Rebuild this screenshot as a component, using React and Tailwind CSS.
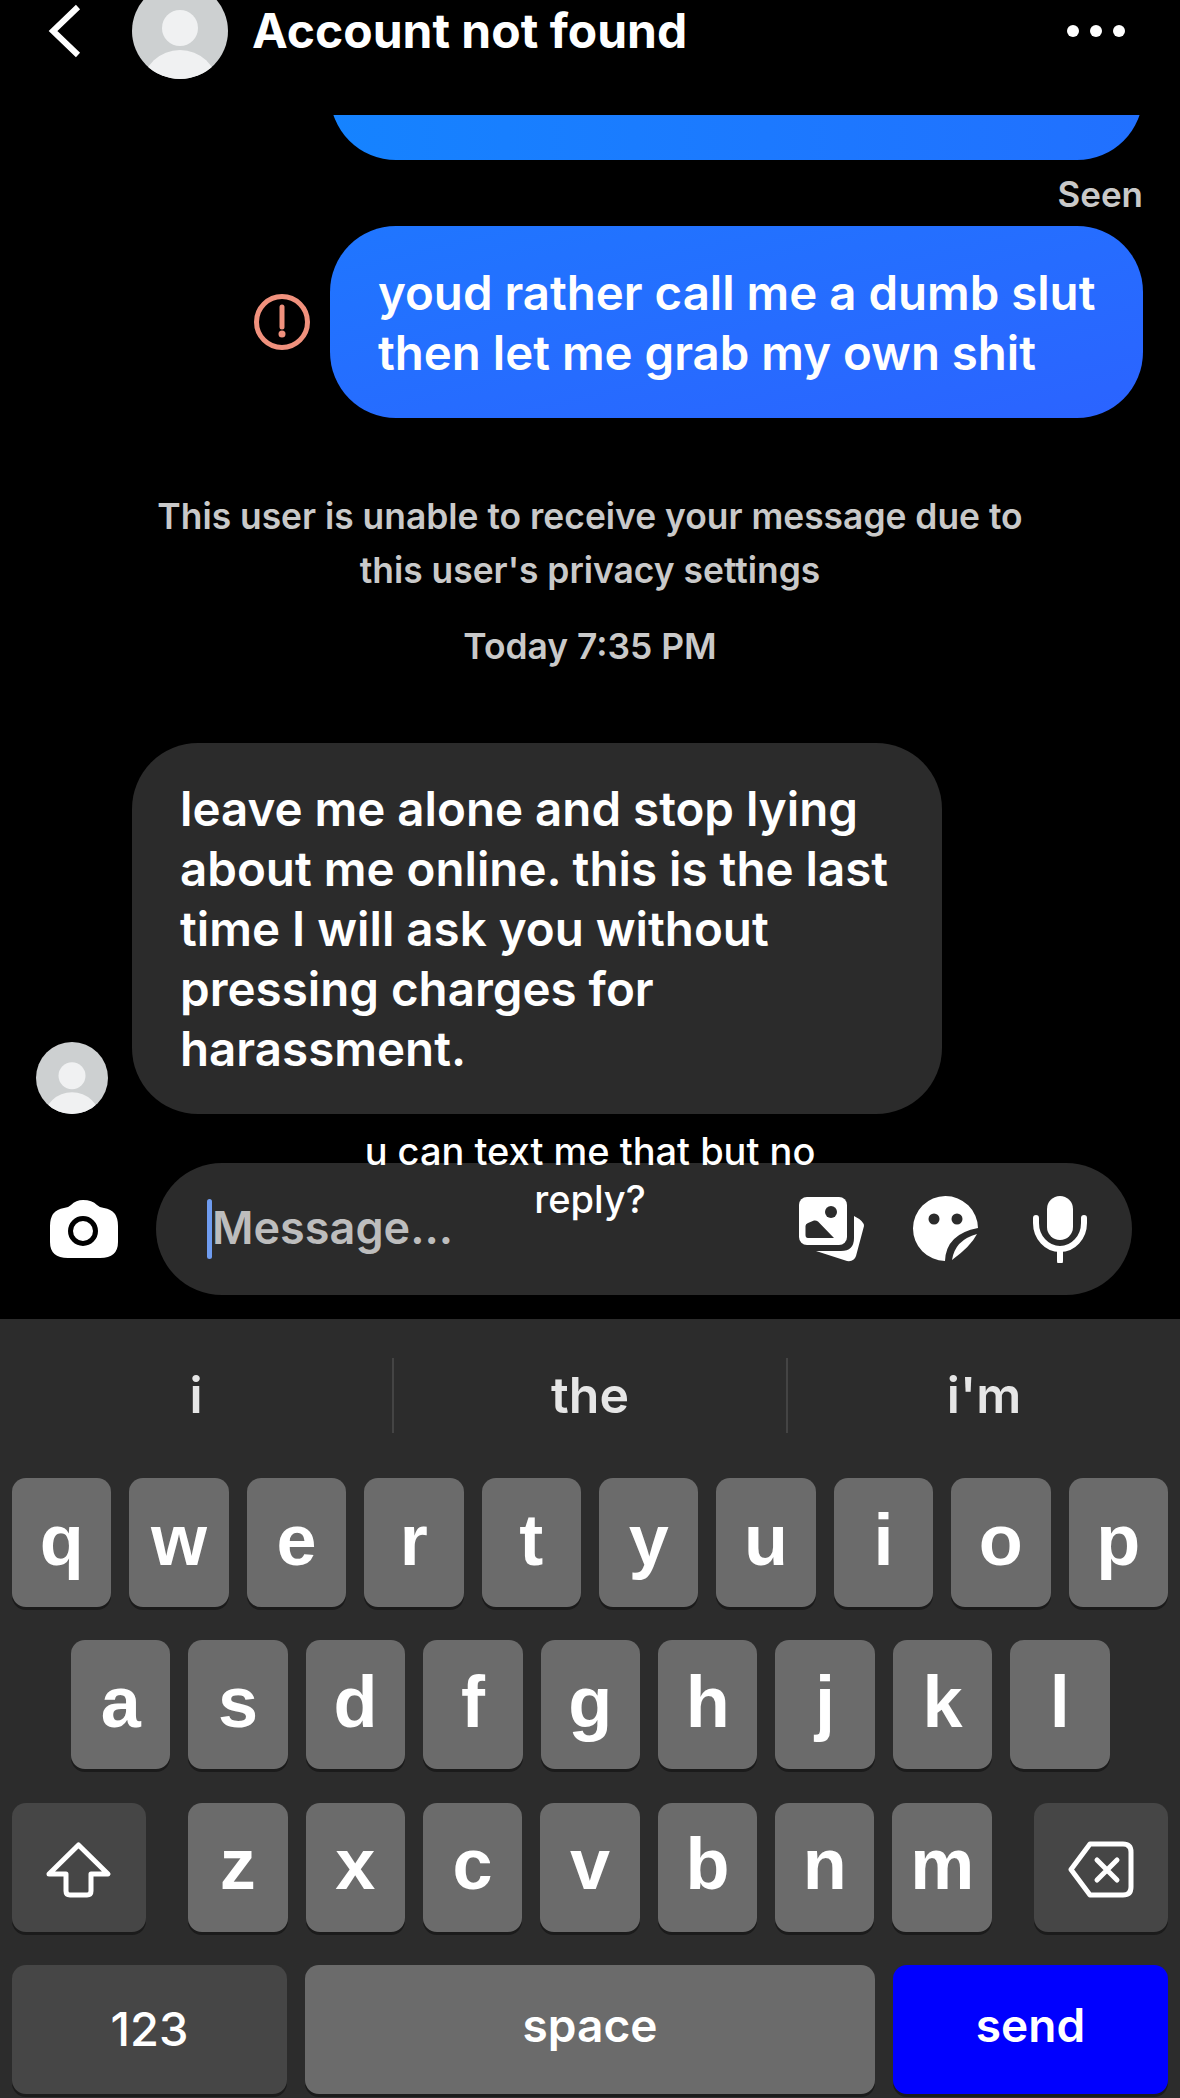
import React from 'react';

const ROW1 = ['q', 'w', 'e', 'r', 't', 'y', 'u', 'i', 'o', 'p'];
const ROW2 = ['a', 's', 'd', 'f', 'g', 'h', 'j', 'k', 'l'];
const ROW3 = ['z', 'x', 'c', 'v', 'b', 'n', 'm'];

const chat = { fontFamily: 'Inter, "Liberation Sans", sans-serif' };

function Avatar({ className }) {
  return (
    <div className={`shrink-0 rounded-full overflow-hidden bg-[#cdd0d1] ${className}`}>
      <svg viewBox="0 0 96 96" className="w-full h-full">
        <circle cx="48" cy="45" r="18" fill="#f0f1f2" />
        <ellipse cx="48" cy="102" rx="37" ry="35" fill="#f0f1f2" />
      </svg>
    </div>
  );
}

function Key({ children, className = 'w-[99.4px] bg-[#6b6b6b]' }) {
  return (
    <div
      className={`h-[129px] rounded-[14px] flex items-center justify-center text-white font-bold text-[72px] shadow-[0_3px_0_#1b1b1b] ${className}`}
      style={{ fontFamily: '"Liberation Sans", sans-serif' }}
    >
      <span className="-mt-[6px]">{children}</span>
    </div>
  );
}

function GalleryIcon() {
  return (
    <svg viewBox="0 0 66 66" className="w-[66px] h-[66px]">
      <path d="M17 55 L48 65 Q55 66 57 60 L65 30 Q65 25 55 20 L55 42 Q55 55 42 55 Z" fill="#fff" />
      <rect x="0" y="1" width="48" height="48" rx="8" fill="#fff" />
      <circle cx="32" cy="16" r="6" fill="#2b2b2b" />
      <path d="M6.5 30 Q6.5 28 9 27 L15 24.5 Q17 24 19 25.5 L35 42 L9 42 Q6.5 42 6.5 39 Z" fill="#2b2b2b" />
    </svg>
  );
}

function StickerIcon() {
  return (
    <svg viewBox="0 0 66 66" className="w-[66px] h-[66px]">
      <path d="M65 32 A32.5 32.5 0 1 0 32 65 Q33 38 65 32 Z" fill="#fff" />
      <path d="M39 64 Q42 44 64 38 Q58 50 39 64 Z" fill="#fff" />
      <circle cx="21" cy="23" r="5.5" fill="#2b2b2b" />
      <circle cx="44" cy="23" r="5.5" fill="#2b2b2b" />
    </svg>
  );
}

function MicIcon() {
  return (
    <svg viewBox="0 0 54 67" className="ml-[6px] w-[54px] h-[67px]">
      <rect x="14" y="0" width="26" height="44" rx="13" fill="#fff" />
      <path d="M3 22 V27 A24 26 0 0 0 51 27 V22" fill="none" stroke="#fff" strokeWidth="6" strokeLinecap="round" />
      <path d="M27 53 V65" stroke="#fff" strokeWidth="6" strokeLinecap="round" />
    </svg>
  );
}

function CameraIcon() {
  return (
    <svg viewBox="0 0 68 58" className="w-[68px] h-[58px] shrink-0">
      <path d="M33 0 Q42 0 47 5 Q50 8 54 8 Q68 10 68 26 V42 Q68 58 50 58 H18 Q0 58 0 42 V26 Q0 10 14 8 Q18 8 21 5 Q26 0 33 0 Z" fill="#fff" />
      <circle cx="33" cy="31" r="12.5" fill="none" stroke="#000" strokeWidth="5" />
    </svg>
  );
}

export default function App() {
  return (
    <div className="relative w-[1180px] h-[2098px] overflow-hidden bg-black text-white" style={chat}>
      {/* Header */}
      <header className="h-[62px] flex items-center">
        <svg viewBox="0 0 34 56" className="ml-[48px] w-[34px] h-[56px] shrink-0">
          <path d="M30 4 L5 28 L30 52" fill="none" stroke="#fff" strokeWidth="6" />
        </svg>
        <Avatar className="ml-[50px] w-[96px] h-[96px]" />
        <h1 className="ml-[24px] text-[48px] font-bold whitespace-nowrap">Account not found</h1>
        <div className="ml-auto mr-[55px] flex gap-[11px]">
          <span className="w-[12px] h-[12px] rounded-full bg-white" />
          <span className="w-[12px] h-[12px] rounded-full bg-white" />
          <span className="w-[12px] h-[12px] rounded-full bg-white" />
        </div>
      </header>

      {/* Cut off bubble */}
      <div className="mt-[53px] ml-[330px] w-[813px] h-[45px] overflow-hidden">
        <div className="h-[140px] -mt-[95px] rounded-[66px] bg-linear-to-r from-[#1583ff] to-[#2170ff]" />
      </div>
      <p className="mt-[14px] pr-[37px] text-right text-[35px] leading-[40px] font-semibold text-[#c9c9c9]">Seen</p>

      {/* Sent message */}
      <div className="mt-[12px] flex items-center">
        <svg viewBox="0 0 56 56" className="ml-[254px] w-[56px] h-[56px] shrink-0">
          <circle cx="28" cy="28" r="25.5" fill="none" stroke="#f0917d" strokeWidth="5" />
          <path d="M28 13 V33" stroke="#f0917d" strokeWidth="5" strokeLinecap="round" />
          <circle cx="28" cy="40" r="3.5" fill="#f0917d" />
        </svg>
        <div className="ml-[20px] w-[813px] h-[192px] rounded-[66px] pl-[48px] pt-[37px] text-[47.4px] leading-[60px] font-semibold bg-linear-to-br from-[#1f76ff] to-[#2b63ff]">
          <p>youd rather call me a dumb slut</p>
          <p>then let me grab my own shit</p>
        </div>
      </div>

      {/* System notice */}
      <div className="mt-[72px] text-center text-[#c9c9c9] text-[35.4px] font-semibold">
        <p className="leading-[54px]">This user is unable to receive your message due to</p>
        <p className="leading-[54px]">this user's privacy settings</p>
        <p className="mt-[27px] leading-[44px]">Today 7:35 PM</p>
      </div>

      {/* Received message */}
      <div className="mt-[74px] flex items-end">
        <Avatar className="ml-[36px] w-[72px] h-[72px]" />
        <div className="ml-[24px] w-[810px] h-[371px] rounded-[66px] bg-[#2b2b2b] pl-[48px] pt-[36px] text-[47.5px] leading-[60px] font-semibold">
          <p>leave me alone and stop lying</p>
          <p>about me online. this is the last</p>
          <p>time I will ask you without</p>
          <p>pressing charges for</p>
          <p>harassment.</p>
        </div>
      </div>

      {/* Message bar */}
      <div className="mt-[49px] flex items-center h-[132px]">
        <div className="ml-[50px]">
          <CameraIcon />
        </div>
        <div className="ml-[38px] w-[976px] h-[132px] rounded-[66px] bg-[#2b2b2b] flex items-center">
          <span className="ml-[51px] w-[5px] h-[60px] rounded-full bg-[#6f9cf0]" />
          <span className="text-[45px] font-semibold text-[#bdbdbd] -mt-[3px]">Message...</span>
          <div className="ml-auto mr-[45px] flex items-center gap-[48px]">
            <GalleryIcon />
            <StickerIcon />
            <MicIcon />
          </div>
        </div>
      </div>

      {/* Overlay caption */}
      <p className="absolute left-0 right-0 top-[1127px] text-center text-[38px] leading-[48px] font-medium">
        u can text me that but no
        <br />
        reply?
      </p>

      {/* Keyboard */}
      <div className="mt-[24px] bg-[#2c2c2c] h-[779px]">
        <div className="h-[159px] flex items-start pt-[39px]">
          <div className="flex-1 h-[75px] flex items-center justify-center text-[50px] font-semibold text-[#e6e6e6]">i</div>
          <div className="w-[2px] h-[75px] bg-[#444]" />
          <div className="flex-1 h-[75px] flex items-center justify-center text-[50px] font-semibold text-[#e6e6e6]">the</div>
          <div className="w-[2px] h-[75px] bg-[#444]" />
          <div className="flex-1 h-[75px] flex items-center justify-center text-[50px] font-semibold text-[#e6e6e6]">i'm</div>
        </div>

        <div className="flex flex-col gap-[33.33px] px-[12px]">
          <div className="flex justify-between">
            {ROW1.map(k => <Key key={k}>{k}</Key>)}
          </div>
          <div className="flex gap-[18px] pl-[59px]">
            {ROW2.map(k => <Key key={k}>{k}</Key>)}
          </div>
          <div className="flex justify-between">
            <Key className="w-[134px] bg-[#464646]">
              <svg viewBox="0 0 66 57" className="block mt-[10px] w-[66px] h-[57px]">
                <path d="M32.5 4 L62 33 H45 V50 Q45 54 41 54 H24 Q20 54 20 50 V33 H3 Z" fill="none" stroke="#fff" strokeWidth="5" strokeLinejoin="round" />
              </svg>
            </Key>
            <div className="flex gap-[18px]">
              {ROW3.map(k => <Key key={k}>{k}</Key>)}
            </div>
            <Key className="w-[134px] bg-[#464646]">
              <svg viewBox="0 0 66 57" className="block mt-[10px] w-[66px] h-[57px]">
                <path d="M22 3 H55 Q63 3 63 11 V46 Q63 54 55 54 H22 L3 28.5 Z" fill="none" stroke="#fff" strokeWidth="5" strokeLinejoin="round" />
                <path d="M29 19 L49 39 M49 19 L29 39" stroke="#fff" strokeWidth="5" strokeLinecap="round" />
              </svg>
            </Key>
          </div>
          <div className="flex gap-[18px]">
            <div className="w-[275px] h-[129px] rounded-[14px] bg-[#464646] shadow-[0_3px_0_#1b1b1b] flex items-center justify-center text-[47px] font-medium">123</div>
            <div className="w-[570px] h-[129px] rounded-[14px] bg-[#6b6b6b] shadow-[0_3px_0_#1b1b1b] flex items-center justify-center text-[46px] font-semibold pb-[8px]">space</div>
            <div className="w-[275px] h-[129px] rounded-[14px] bg-[#0000ff] shadow-[0_3px_0_#1b1b1b] flex items-center justify-center text-[46px] font-semibold pb-[8px]">send</div>
          </div>
        </div>
      </div>
    </div>
  );
}
